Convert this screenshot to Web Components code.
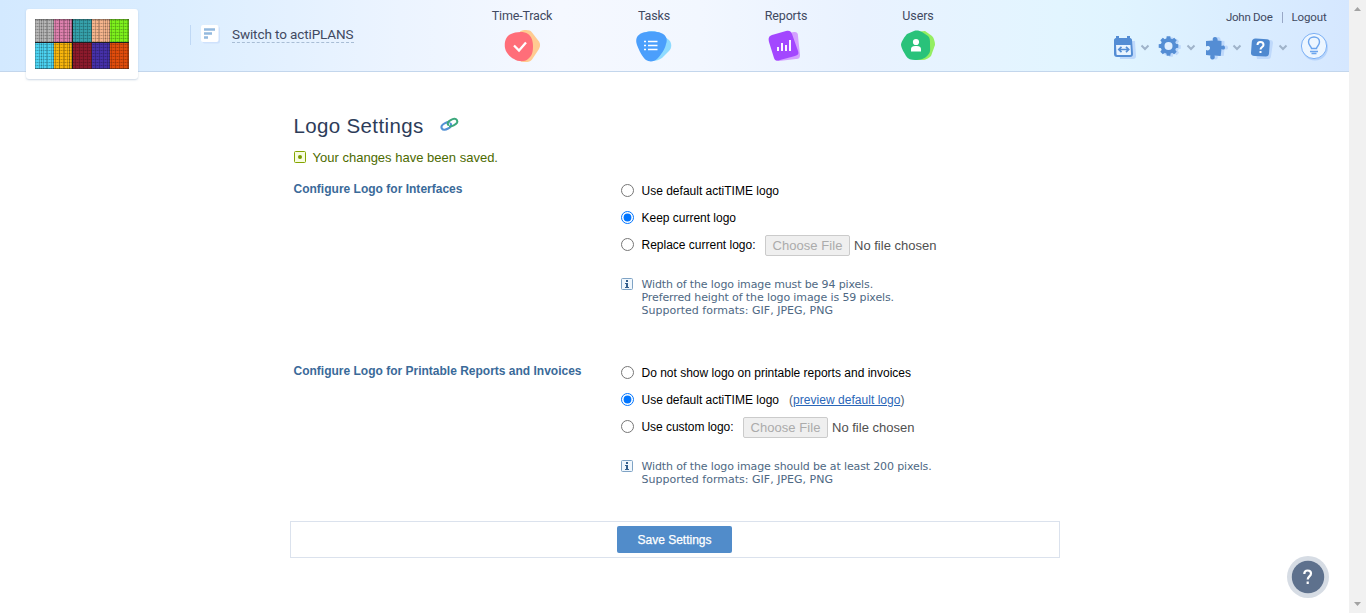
<!DOCTYPE html>
<html lang="en"><head><meta charset="utf-8"><title>Logo Settings</title>
<style>html,body{margin:0;height:100%;overflow:hidden;background:#fff}body{font:12px "Liberation Sans",Arial,sans-serif;color:#000}</style>
</head><body><settings-page></settings-page>
<script>
const define=(name,html,init)=>customElements.define(name,class extends HTMLElement{
  connectedCallback(){
    if(this.shadowRoot)return;
    const t=document.createElement('template');t.innerHTML=html;
    this.attachShadow({mode:'open'}).append(t.content.cloneNode(true));
    if(init)init(this,this.shadowRoot);
  }
});

// Text run whose tracking is adjusted to a given width
define('fit-text','<style>:host{display:inline-block;white-space:nowrap;flex:none}</style><slot></slot>',el=>{
  const w=+el.getAttribute('w'),n=el.textContent.length,now=el.getBoundingClientRect().width;
  el.style.letterSpacing=((w-now)/n)+'px';
  el.style.width=w+'px';
});

define('brand-logo',`<style>:host{display:block;flex:none;box-sizing:border-box;width:112px;height:70px;padding:10px 9px;background:#fff;border-radius:3px;box-shadow:0 1px 2px #9fb4cc88}svg{display:block}</style>
<svg width="94" height="50" viewBox="0 0 94 50"><defs>
<pattern id="mesh" width="4" height="3" patternUnits="userSpaceOnUse"><path d="M.5 0V3" stroke="#000" stroke-opacity=".2"/><path d="M0 1.500H4" stroke="#000" stroke-opacity=".12"/><path d="M2 1.500h1" stroke="#000" stroke-opacity=".14"/></pattern></defs>
<path fill="#b5b5b5" d="M0 0h19v23H0z"/><path fill="#dd80ad" d="M19 0h18v23H19z"/><path fill="#35a0aa" d="M37 0h20v23H37z"/><path fill="#f5b48c" d="M57 0h18v23H57z"/><path fill="#7df01c" d="M75 0h19v23H75z"/>
<path fill="#4bd2f0" d="M0 23h19v27H0z"/><path fill="#f7b50c" d="M19 23h18v27H19z"/><path fill="#8c1a2c" d="M37 23h20v27H37z"/><path fill="#4530a8" d="M57 23h18v27H57z"/><path fill="#e04c0c" d="M75 23h19v27H75z"/>
<path fill="url(#mesh)" d="M0 0h94v50H0z"/><path d="M6.500 0v50M11.500 0v50M24.500 0v50M29.500 0v50M63.500 0v23M70.500 0v23" stroke="#000" stroke-opacity=".18"/><path d="M0 23.500h94" stroke="#1c1c22"/><path d="M37.500 0v50" stroke="#17171c"/><path d="M18.500 0v50M34.500 0v50M56.500 0v50M74.500 0v50M93.500 0v50M0 .5h94M0 49.500h94" stroke="#222" stroke-opacity=".38"/></svg>`);

define('product-switch',`<style>:host{display:flex;flex:none;align-items:flex-start;margin-top:25px;height:20px;border-left:1px solid #bfd8f5;margin-left:52px;padding-left:10px;color:#3f4961;font:13.500px Roboto,sans-serif}svg{display:block;margin-right:11px}a{line-height:19px;height:17px;border-bottom:1px dashed #a8bdd5}</style>
<svg width="20" height="19"><rect x="1.500" y="1.500" width="17.500" height="17" rx="2" fill="#cfe2fc"/><rect width="17.500" height="17" rx="2" fill="#fff"/><path d="M3 4.500h11M3 8.500h8M3 12.500h4" stroke="#93b9de" stroke-width="2.600"/></svg><a><fit-text w="121.500">Switch to actiPLANS</fit-text></a>`);

const navIcons={
 track:'<path fill="#ffcb91" d="M17 1.500c4-2 10-2 12 1l7 9c2 3 1 6-1 9l-6 9c-2 3-7 3-11 2z"/><path fill="#ff6e79" d="M8 4c4-2 13-3 17 0 3 2 5 6 5 12 0 6-1 10-5 13-3 3-10 3-14 0-4-2-8-6-9-11-1-6 1-12 6-14z"/><path d="m11 15.500 5 5 7-8" fill="none" stroke="#fff" stroke-width="2.300"/>',
 tasks:'<path fill="#8fdbff" d="M11 2c5-2 9-1 14 1l9 7c3 3 3 8 0 11l-7 7c-3 2-6 3-9 3z"/><path fill="#4b9ffc" d="M7 3c5-2 15-2 19 0 5 2 7 6 5 11-1 5-5 11-9 15-3 3-8 3-11 1-4-3-7-10-9-15-2-6 0-10 5-12z"/><path d="M9 11.500h2M13 11.500h9.500M9 15.500h2M13 15.500h9.500M9 19.500h2M13 19.500h9.500" stroke="#fff" stroke-width="1.700"/>',
 reports:'<path fill="#d4a0ff" d="M15 4l12-2c3 0 4 1 4 4l2 19c0 3-1 4-4 4l-17 2c-3 0-4-1-4-4z"/><path fill="#a347ff" d="M5 5l14-4c3-1 5 0 6 3l6 17c1 3 0 4-3 5l-15 4c-3 1-5 1-6-2L2 12c-1-4 0-6 3-7z"/><path d="M11 21v-4M15 21v-8M19 21v-6M23 21V10" stroke="#fff" stroke-width="1.900"/>',
 users:'<path fill="#94ee61" d="M16 2l10-1 7 5c2 2 3 6 3 9l-4 11c-2 2-5 4-9 4h-5z"/><path fill="#29c27a" d="M8 4l7-3c3-1 6 0 8 1l6 4c2 2 2 4 2 8 0 5 1 8-2 11-3 4-8 5-13 5-4 0-7-1-9-4-2-4-4-6-5-11 0-3 4-9 6-11z"/><circle cx="17" cy="12" r="3.100" fill="#fff"/><path fill="#fff" d="M12 21.500v-2c0-3 2-3.500 5-3.500s5 .5 5 3.500v2z"/>'};
define('nav-item',`<style>:host{display:flex;flex-direction:column;align-items:center;width:132px;font:12.500px Roboto,sans-serif;color:#3f4961}.t{height:16px;line-height:16px;margin-top:8px;padding-left:1px}svg{display:block;margin:6px 0 0 0}</style><div class="t"><slot></slot></div><svg width="38" height="34"></svg>`,
 (el,r)=>r.querySelector('svg').innerHTML=navIcons[el.getAttribute('icon')]);

const teeth=[0,45,90,135,180,225,270,315].map(a=>`<path d="M8.700 .2h3.600l.6 4H8.100z" transform="rotate(${a} 10.500 10)"/>`).join('');
const puzzle='M2 5 9 4.500C8 3 9 1 11 1s3 2 2.500 3.500L17.500 5v5c1-1 3.500-1 3.500 1.500S19 14 17.500 13l-.8 7-6.200-.5c1 2.500-.5 4-2 4s-3-1.500-2-4L2 19v-5c2 1 4 0 4-2s-2-2.500-4-1.500z';
const toolIcons={
 cal:'<path fill="#bfd9fb" d="M6 5h17l1 15c0 2-1 3-3 3H8z"/><path fill="#548dd4" d="M2 4c0-1 1-2 2-2V0h3v2h8V0h3v2c1 0 2 1 2 2l1 14c0 2-1 3-3 3H5c-2 0-3-1-3-3z"/><path fill="#e9f4ff" d="M4 9h14.500l.5 9c0 .7-.3 1-1 1H5.500c-.7 0-1-.3-1-1z"/><path d="M7 13.500h9.500M9.500 10.800l-2.700 2.700 2.700 2.700M14 10.800l2.700 2.700-2.700 2.700" fill="none" stroke="#548dd4" stroke-width="1.700"/>',
 gear:`<g fill="#bfd9fb" transform="translate(2.500 1)">${teeth}<circle cx="10.500" cy="10" r="7.800"/></g><g fill="#548dd4">${teeth}<circle cx="10.500" cy="10" r="7.800"/></g><circle cx="10.500" cy="10" r="4" fill="#dfeeff"/>`,
 puzzle:`<path fill="#bfd9fb" transform="translate(3 0)" d="${puzzle}"/><path fill="#548dd4" d="${puzzle}"/>`,
 help:'<path fill="#bfd9fb" d="M4 5l16-1c2 0 3 1 3 3l-2 13c0 2-1 3-3 3H7z"/><path fill="#4f89d0" d="m6 2.500 11 .8c2 .2 3 1.200 2.800 3.200l-.8 11c-.2 2-1.200 3-3.200 3l-11-.5c-3-.2-4-1.200-3.800-3.200L1.800 6c.2-2.500 1.700-3.700 4.200-3.500z"/><path d="M7.500 9c0-2 1-3 3-3s3 1 3 3c0 2-3 2-3 4.500M10.500 15v2" fill="none" stroke="#fff" stroke-width="2"/>'};
define('tool-menu','<style>:host{display:flex;width:46px;flex:none}svg{display:block}</style><svg width="46" height="24"></svg>',
 (el,r)=>r.querySelector('svg').innerHTML=toolIcons[el.getAttribute('icon')]+'<path d="m29.500 9.500 3.500 3.500 3.500-3.500" fill="none" stroke="#9fb3ca" stroke-width="2"/>');

define('account-tools',`<style>:host{display:block;width:217px;flex:none;margin-left:auto;margin-right:19px}.who{display:flex;justify-content:flex-end;align-items:center;margin:10px 3.500px 0 0;height:14px;font:11.500px/14px Roboto,sans-serif;color:#3f4961}.who i{width:1px;height:11px;background:#98a7c6;margin:0 9px 0 9px}.tools{display:flex;padding-top:12px}tool-menu:first-child{margin-left:-1px}.bulb{display:block;margin:-4px 0 0 4px}</style>
<div class="who"><fit-text w="46.500">John Doe</fit-text><i></i><fit-text w="35">Logout</fit-text></div>
<div class="tools"><tool-menu icon="cal"></tool-menu><tool-menu icon="gear"></tool-menu><tool-menu icon="puzzle"></tool-menu><tool-menu icon="help"></tool-menu>
<svg class="bulb" width="30" height="30"><circle cx="15" cy="15.500" r="13" fill="#b5d3fb"/><circle cx="14" cy="14" r="12.600" fill="#edf6ff" stroke="#7db1f5"/><path d="M11.500 16.500c0-2-3-3-3-6.500 0-3 2.500-5 5.500-5s5.500 2 5.500 5c0 3.500-3 4.500-3 6.500zM10 19.500h8M11.500 21.500h5" fill="none" stroke="#6ca5ee" stroke-width="1.400"/></svg></div>`);

define('app-header',`<style>:host{display:flex;box-sizing:border-box;height:72px;border-bottom:1px solid #c3d6ec;background:linear-gradient(90deg,#d3e9ff 0,#dceeff 180px,#ecf4ff 400px,#f5f8ff 560px,#f2f7ff 700px,#e9f2ff 860px,#e2f5ff 1060px,#e0f4ff 1120px,#d5e7ff 100%)}brand-logo{margin:9px 0 0 26px}nav{display:flex;margin-left:102px}</style>
<brand-logo></brand-logo><product-switch></product-switch><nav><nav-item icon="track"><fit-text w="60.500">Time-Track</fit-text></nav-item><nav-item icon="tasks"><fit-text w="32">Tasks</fit-text></nav-item><nav-item icon="reports"><fit-text w="42.500">Reports</fit-text></nav-item><nav-item icon="users"><fit-text w="31.500">Users</fit-text></nav-item></nav><account-tools></account-tools>`);

define('page-title',`<style>:host{display:flex;height:28px;align-items:center;font:20.500px/28px "Liberation Sans",Arial,sans-serif;color:#2d3c59}svg{display:block;margin:-4px 0 0 16px}</style><slot></slot>
<svg width="19" height="15" fill="none" stroke-width="2.100" stroke-linecap="round"><path stroke="#5492d5" d="M8.800 5.200C7.200 4.800 2.800 7 1.800 8.800c-1 2 .5 4.200 2.700 4 2-.2 5.500-2 6.300-3.600.5-1 .3-1.900-.2-2.600"/><path stroke="#3ca87c" d="M10 9.400c1.600.4 6-1.800 7-3.600 1-2-.5-4.200-2.700-4-2 .2-5.500 2-6.300 3.600-.5 1-.3 1.900.2 2.600"/></svg>`);

define('status-note',`<style>:host{display:flex;align-items:center;height:16px;font-size:13px;color:#4c6a00}svg{margin-right:7px}</style><svg width="12" height="12"><rect x=".5" y=".5" width="11" height="11" rx="1" fill="#f7fce0" stroke="#84a500"/><circle cx="6" cy="6" r="2" fill="#7b9c00"/></svg><slot></slot>`);

define('radio-row',`<style>:host{display:flex;align-items:center;height:27px;line-height:16px}input{width:13px;height:13px;margin:0 7.500px 0 0;flex:none}</style><input type="radio"><slot></slot>`,
 (el,r)=>r.querySelector('input').checked=el.hasAttribute('checked'));

define('file-picker',`<style>:host{display:flex;align-items:center;margin-top:2px;font-size:13px;color:#505050}button{font:13px "Liberation Sans",Arial,sans-serif;box-sizing:border-box;width:85px;height:21px;padding:0;margin-right:4px;border:1px solid #cbcbcb;border-radius:2px;background:#efefef;color:#ababab}</style><button disabled><fit-text w="70">Choose File</fit-text></button><fit-text w="82.500">No file chosen</fit-text>`);

define('info-note',`<style>:host{display:flex;margin-top:20px;font:11px/13px "DejaVu Sans",Verdana,sans-serif;color:#4e6883}svg{display:block;margin-right:8.500px;flex:none}.l{display:flex;flex-direction:column;align-items:flex-start}</style><svg width="12" height="12"><rect x=".5" y=".5" width="11" height="11" rx="1" fill="#f0f7fd" stroke="#7fa3c5"/><path d="M5 2h2v2H5zM4 5h3v4h1v1H4V9h1V6H4z" fill="#345f8d"/></svg><div class="l"><slot></slot></div>`);

define('setting-group',`<style>:host{display:grid;grid-template-columns:327.500px 1fr;height:182px}h2{font:bold 12px/16px "Liberation Sans",Arial,sans-serif;color:#3a6a99;margin:4px 0 0}</style><h2><slot name="label"></slot></h2><div><slot></slot></div>`);

define('save-bar',`<style>:host{display:flex;justify-content:center;align-items:center;box-sizing:border-box;width:770px;height:37px;border:1px solid #dbe2ed}button{box-sizing:border-box;width:115px;height:27px;padding:0;margin-right:1px;border:0;border-radius:2px;background:#518cca;color:#fff;font:12px "Liberation Sans",Arial,sans-serif;-webkit-text-stroke:.25px #fff}</style><button><fit-text w="74">Save Settings</fit-text></button>`);

define('scroll-rail',`<style>:host{display:flex;flex-direction:column;justify-content:space-between;align-items:center;background:#f1f1f1}svg{display:block}</style><svg width="17" height="17"><path d="m5 11 3.500-4 3.500 4z" fill="#a3a3a3"/></svg><svg width="17" height="17"><path d="m5 6 3.500 4L12 6z" fill="#a3a3a3"/></svg>`);

define('help-bubble',`<style>:host{position:absolute;right:37px;bottom:15px}svg{display:block}</style><svg width="42" height="42"><circle cx="21" cy="21" r="21" fill="#d6dce4"/><circle cx="21" cy="21" r="16.200" fill="#5e718d"/><path d="M17.300 18c0-2.500 1.300-3.500 3.300-3.500s3.400 1 3.400 3c0 2.900-3.300 2.900-3.300 6M20.700 25.500v2.600" fill="none" stroke="#fff" stroke-width="2.200"/></svg>`);

define('settings-page',`<style>:host{display:grid;grid-template-columns:1fr 17px;height:613px;position:relative}main{padding:40px 0 0 293.500px}page-title{margin-bottom:9px}status-note{margin-bottom:12px}save-bar{margin:-20px 0 0 -3.500px}file-picker{margin-left:9.500px}.link{margin-left:10px;color:#4a596e}a{color:#2a66b8;text-decoration:underline}</style>
<div><app-header></app-header><main>
<page-title><fit-text w="130">Logo Settings</fit-text></page-title>
<status-note><fit-text w="185.500">Your changes have been saved.</fit-text></status-note>
<setting-group><fit-text slot="label" w="169">Configure Logo for Interfaces</fit-text>
<radio-row><fit-text w="137.500">Use default actiTIME logo</fit-text></radio-row><radio-row checked><fit-text w="94.500">Keep current logo</fit-text></radio-row><radio-row><fit-text w="114">Replace current logo:</fit-text><file-picker></file-picker></radio-row>
<info-note><fit-text w="231.500">Width of the logo image must be 94 pixels.</fit-text><fit-text w="252.500">Preferred height of the logo image is 59 pixels.</fit-text><fit-text w="191.500">Supported formats: GIF, JPEG, PNG</fit-text></info-note></setting-group>
<setting-group><fit-text slot="label" w="288">Configure Logo for Printable Reports and Invoices</fit-text>
<radio-row><fit-text w="269.500">Do not show logo on printable reports and invoices</fit-text></radio-row><radio-row checked><fit-text w="137.500">Use default actiTIME logo</fit-text><fit-text class="link" w="115.500">(<a>preview default logo</a>)</fit-text></radio-row><radio-row><fit-text w="92">Use custom logo:</fit-text><file-picker></file-picker></radio-row>
<info-note><fit-text w="290">Width of the logo image should be at least 200 pixels.</fit-text><fit-text w="191.500">Supported formats: GIF, JPEG, PNG</fit-text></info-note></setting-group>
<save-bar></save-bar></main></div><scroll-rail></scroll-rail><help-bubble></help-bubble>`);
</script></body></html>
